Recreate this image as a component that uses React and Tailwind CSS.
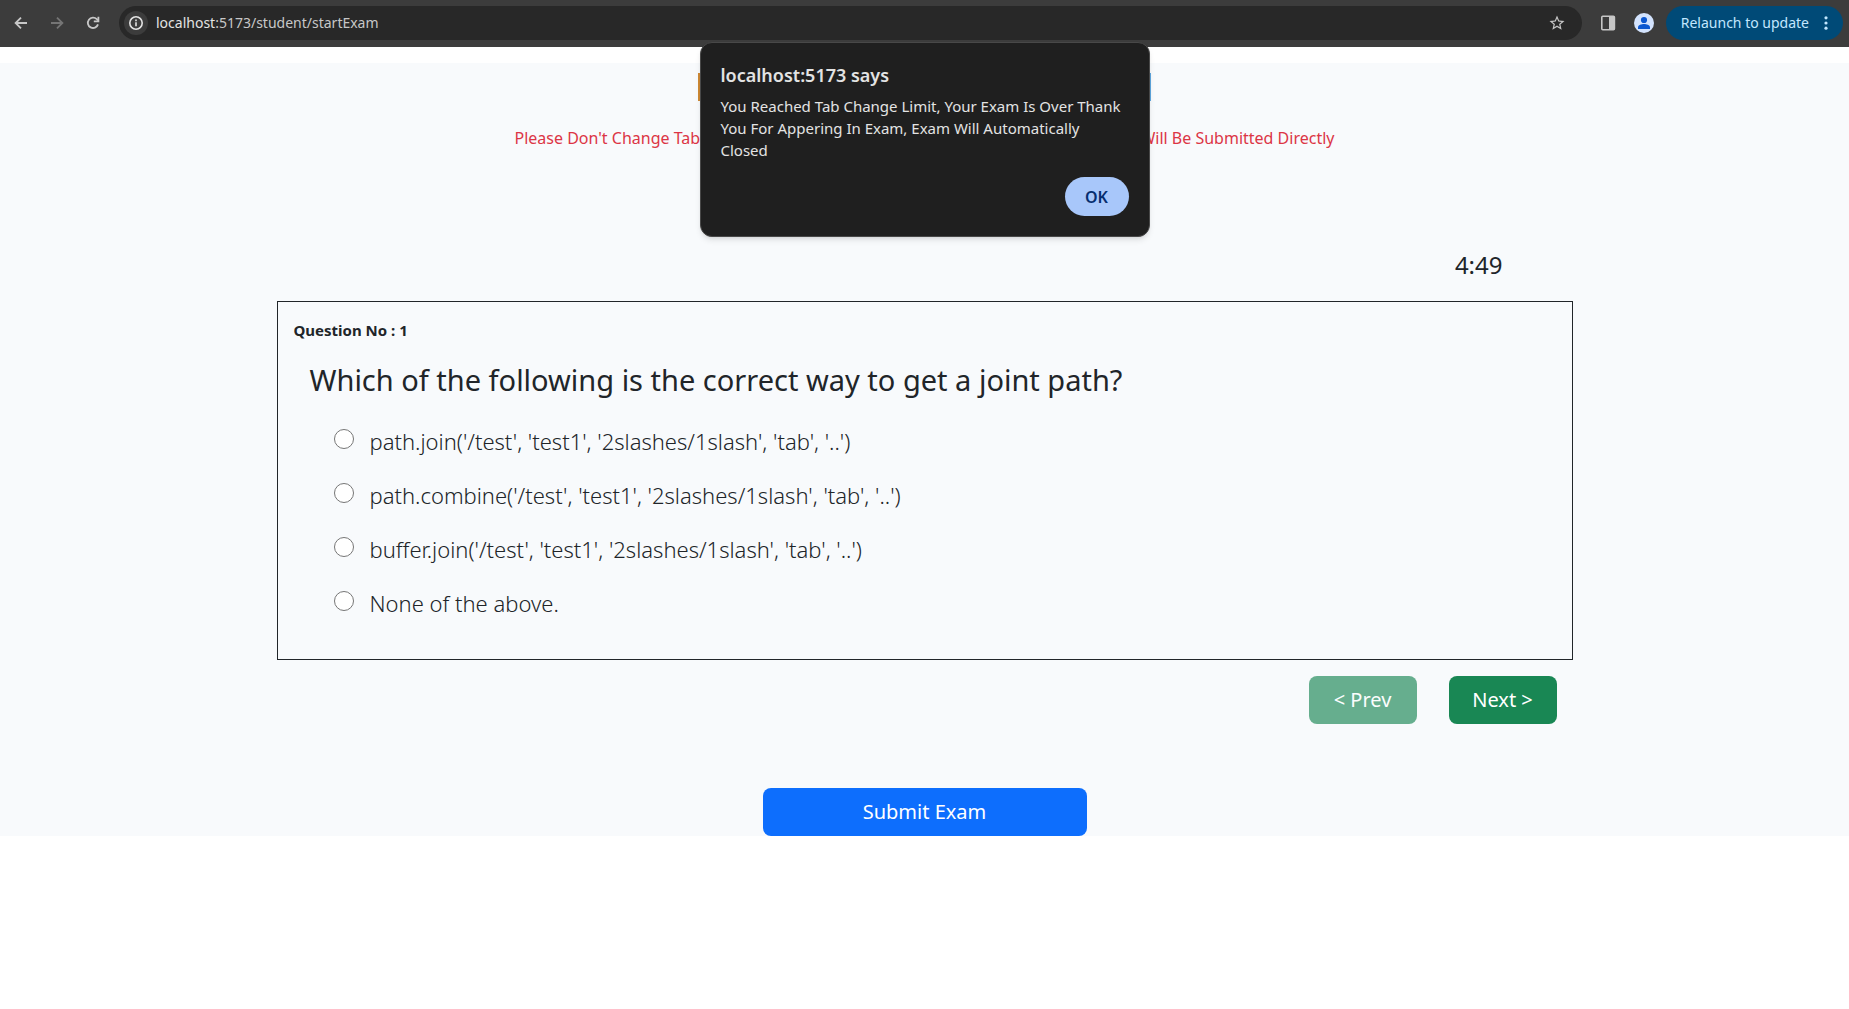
import React from "react";

const options = [
  "path.join('/test', 'test1', '2slashes/1slash', 'tab', '..')",
  "path.combine('/test', 'test1', '2slashes/1slash', 'tab', '..')",
  "buffer.join('/test', 'test1', '2slashes/1slash', 'tab', '..')",
  "None of the above.",
];

function BackIcon() {
  return (
    <svg viewBox="0 0 16 16" className="h-4 w-4" fill="none" stroke="currentColor" strokeWidth="1.8">
      <path d="M14 8H3M8 2.6 2.6 8 8 13.4" />
    </svg>
  );
}

function ForwardIcon() {
  return (
    <svg viewBox="0 0 16 16" className="h-4 w-4" fill="none" stroke="currentColor" strokeWidth="1.8">
      <path d="M2 8h11M8 2.6 13.4 8 8 13.4" />
    </svg>
  );
}

function ReloadIcon() {
  return (
    <svg viewBox="0 0 16 16" className="h-4 w-4" fill="none" stroke="currentColor" strokeWidth="1.8">
      <path d="M13 9.4A5.2 5.2 0 1 1 11.8 4.2L13 5.5" />
      <path d="M13.4 1.8v4.6H8.8" />
    </svg>
  );
}

function InfoIcon() {
  return (
    <svg viewBox="0 0 16 16" className="h-4 w-4" fill="none" stroke="currentColor" strokeWidth="1.6">
      <circle cx="8" cy="8" r="6.2" />
      <path d="M8 7.2v4M8 4.6v1.6" />
    </svg>
  );
}

function StarIcon() {
  return (
    <svg viewBox="0 0 24 24" className="h-[18px] w-[18px]" fill="currentColor">
      <path d="M22 9.24l-7.19-.62L12 2 9.19 8.63 2 9.24l5.46 4.73L5.82 21 12 17.27 18.18 21l-1.63-7.03L22 9.24zM12 15.4l-3.76 2.27 1-4.28-3.32-2.88 4.38-.38L12 6.1l1.71 4.04 4.38.38-3.32 2.88 1 4.28L12 15.4z" />
    </svg>
  );
}

function PanelIcon() {
  return (
    <svg viewBox="0 0 16 16" className="h-4 w-4">
      <rect x="1.8" y="1.3" width="12.6" height="13.4" rx="1" fill="none" stroke="#c7c7c7" strokeWidth="1.6" />
      <rect x="9" y="1.3" width="5.4" height="13.4" fill="#c7c7c7" />
    </svg>
  );
}

function ProfileIcon() {
  return (
    <svg viewBox="0 0 20 20" className="h-5 w-5">
      <circle cx="10" cy="10" r="10" fill="#d3e3fd" />
      <circle cx="10" cy="7" r="3.1" fill="#0b57d0" />
      <path d="M4 16v-1.6c0-2.2 3.6-3.3 6-3.3s6 1.1 6 3.3V16z" fill="#0b57d0" />
    </svg>
  );
}

function BrowserBar() {
  return (
    <header className="flex h-[47px] items-center bg-[#3c3c3c] pr-1.5 pb-px pl-[11px] text-[#c7c7c7]">
      <div className="flex items-center gap-5">
        <button type="button" aria-label="Back" className="pl-0.5"><BackIcon /></button>
        <button type="button" aria-label="Forward" className="text-[#757575]"><ForwardIcon /></button>
        <button type="button" aria-label="Reload"><ReloadIcon /></button>
      </div>
      <div className="ml-[18px] flex h-[34px] min-w-0 flex-1 items-center rounded-full bg-[#282828] pr-4 pl-[5px]">
        <button type="button" aria-label="Site information" className="flex h-6 w-6 items-center justify-center rounded-full bg-[#3c3c3c] text-[#e3e3e3]">
          <InfoIcon />
        </button>
        <a href="#exam" className="ml-2 flex-1 text-sm whitespace-nowrap text-[#c7c7c7]">
          <span className="text-[#e3e3e3]">localhost</span>:5173/student/startExam
        </a>
        <button type="button" aria-label="Bookmark"><StarIcon /></button>
      </div>
      <button type="button" aria-label="Side panel" className="ml-[18px]"><PanelIcon /></button>
      <button type="button" aria-label="Profile" className="ml-[18px]"><ProfileIcon /></button>
      <button type="button" className="ml-3 flex h-[34px] items-center gap-3 rounded-full bg-[#004a77] pr-3 pl-[15px] text-sm whitespace-nowrap text-[#c2e7ff]">
        Relaunch to update
        <svg viewBox="0 0 10 16" className="h-4 w-2.5" fill="currentColor">
          <circle cx="5" cy="2.8" r="1.6" />
          <circle cx="5" cy="8" r="1.6" />
          <circle cx="5" cy="13.2" r="1.6" />
        </svg>
      </button>
    </header>
  );
}

function AlertDialog() {
  return (
    <div
      role="alertdialog"
      aria-labelledby="alert-title"
      aria-describedby="alert-text"
      className="absolute top-[42px] left-1/2 flex w-[450px] -translate-x-1/2 flex-col rounded-xl border border-[#484848] bg-[#1f1f1f] px-5 pt-5 pb-5 text-[#e3e3e3] shadow-md"
    >
      <h2 id="alert-title" className="text-lg leading-6 font-semibold">localhost:5173 says</h2>
      <p id="alert-text" className="mt-2 text-[15px] leading-[22px]">
        You Reached Tab Change Limit, Your Exam Is Over Thank<br />
        You For Appering In Exam, Exam Will Automatically<br />
        Closed
      </p>
      <button type="button" className="mt-4 h-[39px] w-16 self-end rounded-full bg-[#a8c7fa] text-base font-semibold text-[#062e6f]">
        OK
      </button>
    </div>
  );
}

export default function App() {
  return (
    <div className="relative min-h-screen bg-white font-['Noto_Sans',sans-serif] text-[#212529]">
      <BrowserBar />
      <main className="mt-4 bg-[#f8fafc] pt-2.5">
        <div className="mx-auto h-7 w-[453px] border-r-2 border-l-2 border-r-[#5fa8e0] border-l-[#d08a35]" />
        <p className="mx-auto mt-[25px] flex w-[820px] justify-between text-base leading-6 whitespace-nowrap text-[#dc3545]">
          <span>Please Don't Change Tab Or</span>
          <span>Exam Will Be Submitted Directly</span>
        </p>

        <div className="mx-auto w-full max-w-[1296px]">
          <div className="mt-[99px] flex justify-end pr-[70px] text-2xl leading-8">
            <time>4:49</time>
          </div>

          <fieldset className="mt-5 border border-[#212529] px-4 pt-4 pb-4">
            <p className="text-[15px] leading-6 font-bold">Question No : 1</p>
            <h1 className="mt-5 ml-4 text-[29px] leading-9">
              Which of the following is the correct way to get a joint path?
            </h1>
            <div className="mt-[29px] ml-10">
              {options.map((option) => (
                <label key={option} className="flex h-[54px] items-start text-[22px] leading-7 font-light">
                  <input
                    type="radio"
                    name="answer"
                    className="mt-0.5 mr-4 h-5 w-5 appearance-none rounded-full border border-[#767676] bg-white checked:border-[6px] checked:border-[#0d6efd]"
                  />
                  {option}
                </label>
              ))}
            </div>
          </fieldset>

          <div className="mt-4 flex justify-end gap-8 pr-4 text-xl text-white">
            <button type="button" disabled className="h-12 w-[108px] rounded-lg bg-[#198754] opacity-65">&lt; Prev</button>
            <button type="button" className="h-12 w-[108px] rounded-lg bg-[#198754]">Next &gt;</button>
          </div>
          <div className="mt-16 flex justify-center">
            <button type="button" className="h-12 w-1/4 rounded-lg bg-[#0d6efd] text-xl text-white">Submit Exam</button>
          </div>
        </div>
      </main>
      <AlertDialog />
    </div>
  );
}
